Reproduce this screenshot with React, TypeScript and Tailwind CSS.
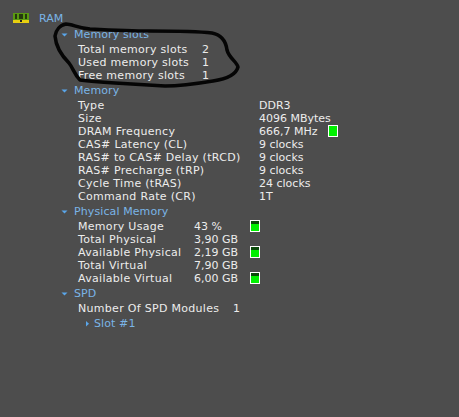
const blue = 'text-[#7ab4e6]';

function Gauge({ level }: { level?: boolean }) {
  return (
    <span className="relative ml-2 -mt-[1px] inline-block h-[12px] w-[10px] border border-white bg-[#00f000]">
      {level && <span className="absolute left-0 right-0 top-0 h-[3px] bg-[#0a4a0a]" />}
    </span>
  );
}

function Arrow({ open = true }: { open?: boolean }) {
  return (
    <svg width="7" height="7" viewBox="0 0 7 7" className="shrink-0">
      {open ? <path d="M0.5 2.5h6L3.5 5.5z" fill="#5aa6ea" /> : <path d="M2 1v5.5l3-2.75z" fill="#5aa6ea" />}
    </svg>
  );
}

function Section({ title, labelWidth, rows }: {
  title: string;
  labelWidth: string;
  rows: { k: string; v: string; gauge?: 'plain' | 'level'; valueWidth?: string }[];
}) {
  return (
    <section className="mb-[1px]">
      <div className={`flex h-[15px] items-center gap-[6px] pl-[61px] ${blue}`}>
        <Arrow />
        <span className="tracking-[0.1px]">{title}</span>
      </div>
      <div className="pl-[78px] pt-[1px]">
        {rows.map((r) => (
          <div key={r.k} className="flex h-[13px] items-center whitespace-nowrap">
            <span className={`${labelWidth} tracking-[0.3px]`}>{r.k}</span>
            <span className={r.valueWidth}>{r.v}</span>
            {r.gauge && <Gauge level={r.gauge === 'level'} />}
          </div>
        ))}
      </div>
    </section>
  );
}

export default function App() {
  return (
    <div className="relative h-[417px] w-[459px] overflow-hidden bg-[#4d4d4d] pt-[11px] font-['DejaVu_Sans',sans-serif] text-[11px] leading-[13px] text-[#ececec]">
      <div className={`flex h-[15px] items-center gap-[10px] pl-[13px] ${blue}`}>
        <svg width="16" height="11" viewBox="0 0 16 11">
          <rect y="0" width="16" height="7" fill="#5a9a10" />
          <path d="M3 1v5M7 1v5M9 1v5M13 1v5" stroke="#101010" strokeWidth="1.4" />
          <rect y="7" width="16" height="3" fill="#e8d010" />
          <rect x="7" y="7" width="2" height="2" fill="#222" />
        </svg>
        <span>RAM</span>
      </div>
      <div className="mt-[1px] flex flex-col">
        <Section
          title="Memory slots"
          labelWidth="w-[124px]"
          rows={[
            { k: 'Total memory slots', v: '2' },
            { k: 'Used memory slots', v: '1' },
            { k: 'Free memory slots', v: '1' },
          ]}
        />
        <Section
          title="Memory"
          labelWidth="w-[181px]"
          rows={[
            { k: 'Type', v: 'DDR3' },
            { k: 'Size', v: '4096 MBytes' },
            { k: 'DRAM Frequency', v: '666,7 MHz', gauge: 'plain', valueWidth: 'w-[61px]' },
            { k: 'CAS# Latency (CL)', v: '9 clocks' },
            { k: 'RAS# to CAS# Delay (tRCD)', v: '9 clocks' },
            { k: 'RAS# Precharge (tRP)', v: '9 clocks' },
            { k: 'Cycle Time (tRAS)', v: '24 clocks' },
            { k: 'Command Rate (CR)', v: '1T' },
          ]}
        />
        <Section
          title="Physical Memory"
          labelWidth="w-[116px]"
          rows={[
            { k: 'Memory Usage', v: '43 %', gauge: 'level', valueWidth: 'w-[48px]' },
            { k: 'Total Physical', v: '3,90 GB' },
            { k: 'Available Physical', v: '2,19 GB', gauge: 'level', valueWidth: 'w-[48px]' },
            { k: 'Total Virtual', v: '7,90 GB' },
            { k: 'Available Virtual', v: '6,00 GB', gauge: 'level', valueWidth: 'w-[48px]' },
          ]}
        />
        <Section
          title="SPD"
          labelWidth="w-[155px]"
          rows={[{ k: 'Number Of SPD Modules', v: '1' }]}
        />
        <div className={`flex h-[15px] items-center gap-[3px] pl-[84px] ${blue}`}>
          <Arrow open={false} />
          <span className="tracking-[0.1px]">Slot #1</span>
        </div>
      </div>
      {/* hand-drawn marker ring over the first section */}
      <svg className="absolute left-0 top-0" width="459" height="417" viewBox="0 0 459 417" fill="none">
        <path
          d="M55 36C56 30 60 25 66 24C72 24 78 28 90 29C110 30 130 31 150 31C170 31 195 31 212 33C222 35 226 42 227 50C229 58 237 62 238 67C236 75 226 79 213 81C195 84 180 86 165 86C150 85 130 84 115 83C100 82 88 81 80 80C74 74 73 68 69 63C62 56 56 48 55 36Z"
          stroke="#050505"
          strokeWidth="3.5"
          strokeLinejoin="round"
        />
      </svg>
    </div>
  );
}
